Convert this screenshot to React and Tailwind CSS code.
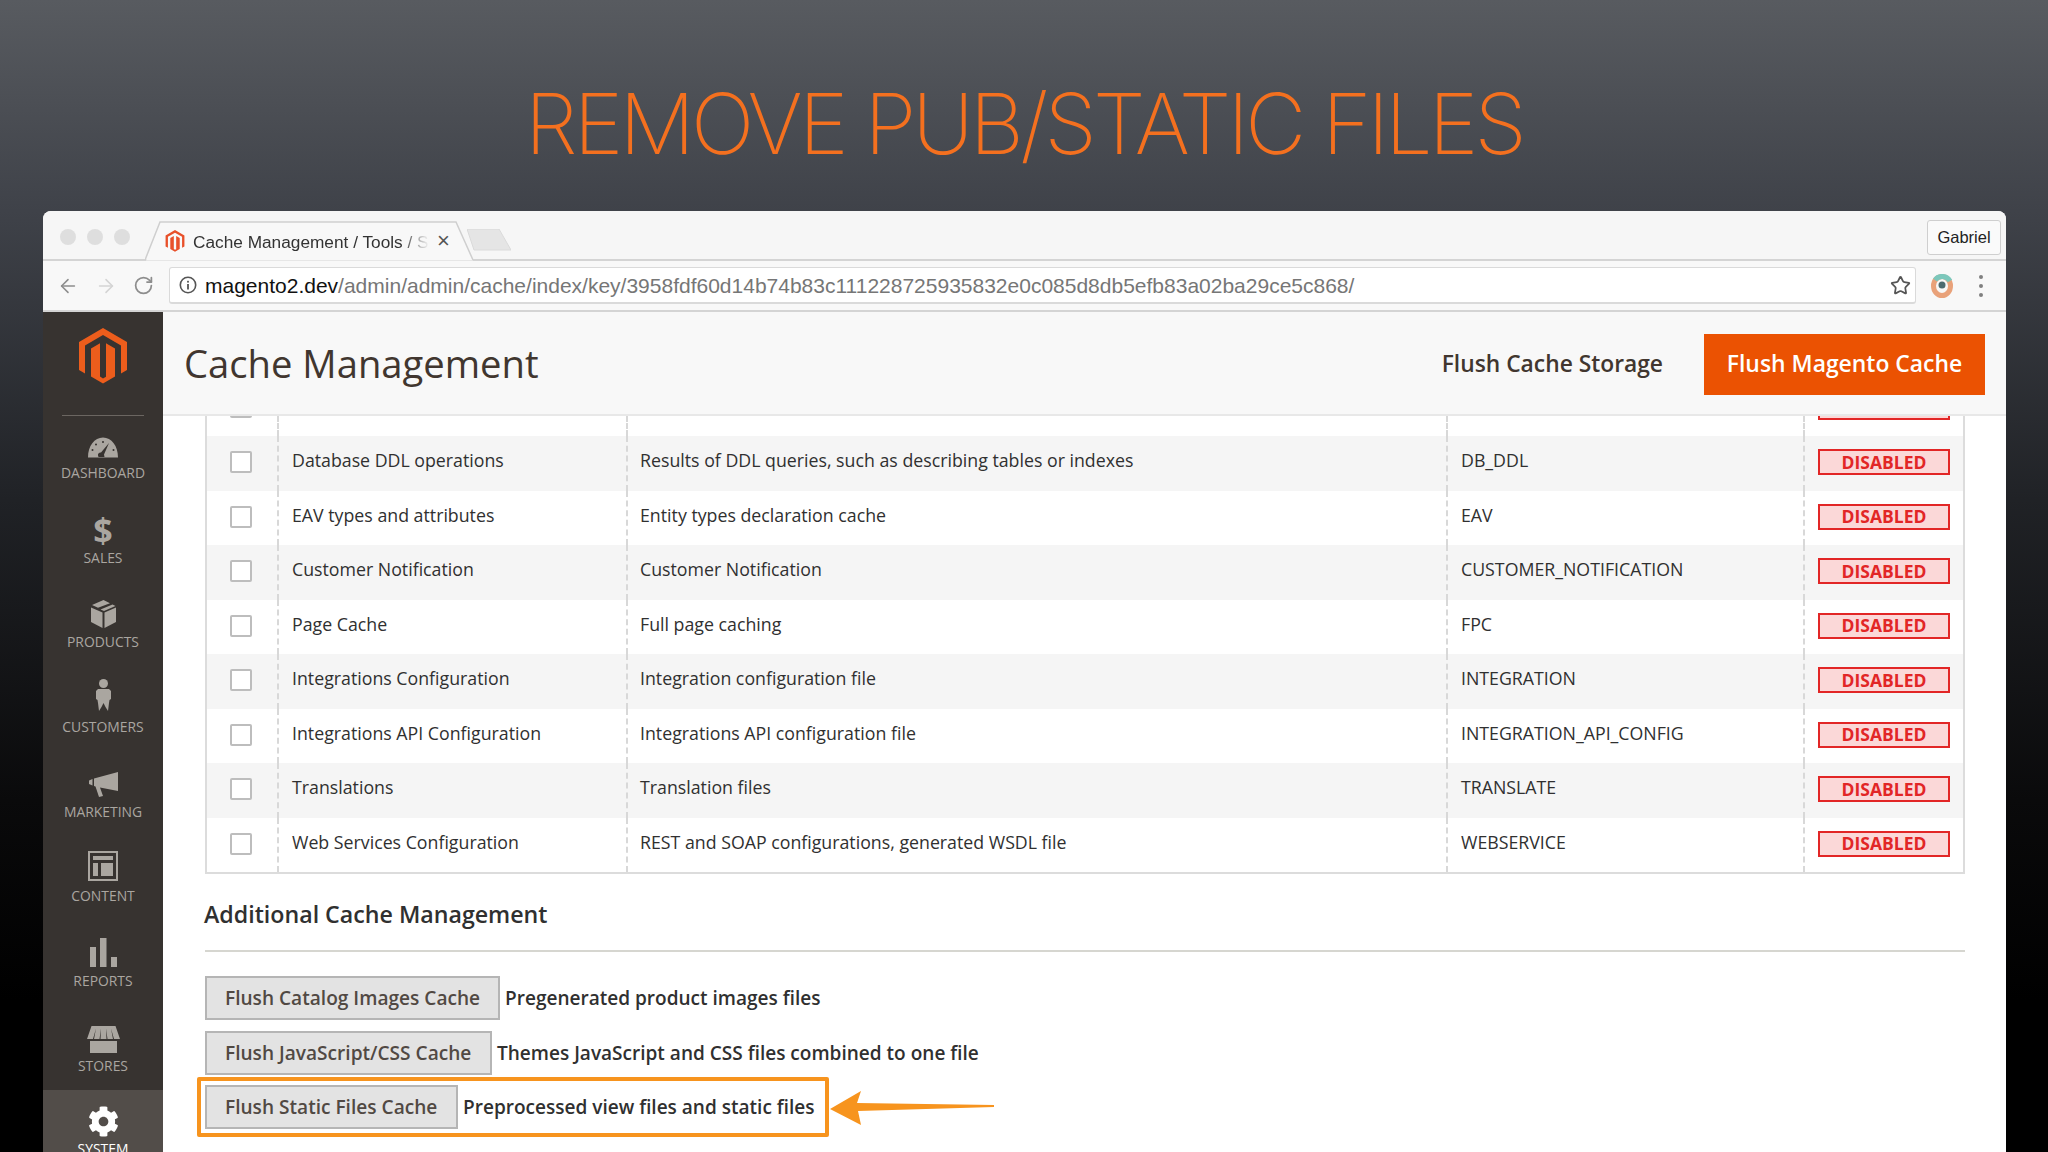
import React from "react";
import { FaCog } from "react-icons/fa";
import { ArrowLeft, ArrowRight, RotateCw, Star } from "lucide-react";

const rows = [
  ["Database DDL operations", "Results of DDL queries, such as describing tables or indexes", "DB_DDL"],
  ["EAV types and attributes", "Entity types declaration cache", "EAV"],
  ["Customer Notification", "Customer Notification", "CUSTOMER_NOTIFICATION"],
  ["Page Cache", "Full page caching", "FPC"],
  ["Integrations Configuration", "Integration configuration file", "INTEGRATION"],
  ["Integrations API Configuration", "Integrations API configuration file", "INTEGRATION_API_CONFIG"],
  ["Translations", "Translation files", "TRANSLATE"],
  ["Web Services Configuration", "REST and SOAP configurations, generated WSDL file", "WEBSERVICE"],
];

const gridCols = "grid grid-cols-[70px_349px_820px_357px_1fr]";
const cellBase = "flex items-center border-l-2 border-dashed border-[#d8d8d8]";

function MagentoLogo({ className }) {
  return (
    <svg viewBox="0 0 24 28" className={className} fill="currentColor">
      <path d="M12 0 24 7V21L21 22.7V8.7L12 3.5 3 8.7V22.7L0 21V7Z" />
      <path d="M10.5 7.6V24.3L12 25.2 13.5 24.4V7.6L18 10.3V24.2L12 27.7 6 24.2V10.3Z" />
    </svg>
  );
}

const Gauge = () => (
  <svg viewBox="0 0 30 21" className="w-[30px] h-[21px] mb-[7px]" fill="#aaa6a0">
    <path d="M0 20.5C0 9 6.5 0.5 15 0.5S30 9 30 20.5ZM15 4a1 1 0 100 2 1 1 0 000-2ZM8 6.5a1 1 0 100 2 1 1 0 000-2ZM4.5 12a1 1 0 100 2 1 1 0 000-2ZM25.500 12a1 1 0 100 2 1 1 0 000-2ZM16 17.500 21 6 13 15.500A2.500 2.500 0 0010 18.500L10.500 20H16.500Z" fillRule="evenodd" />
  </svg>
);
const Box = () => (
  <svg viewBox="0 0 25 28" className="w-[25px] h-[28px] mb-[6px]" fill="#aaa6a0">
    <path d="M12.500 0 19 3.300 7 7.800 1 5ZM21.500 4.500 24.500 6 13 11 9.500 9.500ZM0 7.500 11.500 12.500V28L0 22ZM25 7.500V22L13.500 28V12.500Z" />
  </svg>
);
const Person = () => (
  <svg viewBox="0 0 15 32" className="w-[15px] h-[32px] mb-[8px]" fill="#aaa6a0">
    <circle cx="7.500" cy="4.500" r="4.500" />
    <path d="M2 10H13L15 12V20L13.500 21 13 24 12 32 9.500 28 7.500 24 5.500 28 3 32 2 24 1.500 21 0 20V12Z" />
  </svg>
);
const Megaphone = () => (
  <svg viewBox="0 0 29 25" className="w-[29px] h-[25px] mb-[7px]" fill="#aaa6a0">
    <path d="M29 0V19L11 15.500 14 24 10 25 6.500 14.500 5 14V6.500ZM3.500 7V13.500L0 12V8.500Z" />
  </svg>
);
const Content = () => (
  <svg viewBox="0 0 30 30" className="w-[30px] h-[30px] mb-[7px]" fill="#aaa6a0">
    <path fillRule="evenodd" d="M0 0H30V30H0ZM2 2V28H28V2ZM5 5H25V9H5ZM5 12H10V25H5ZM13 12H25V25H13Z" />
  </svg>
);
const Reports = () => (
  <svg viewBox="0 0 27 29" className="w-[27px] h-[29px] mb-[6px]" fill="#aaa6a0">
    <path d="M0 9H6V29H0ZM10 0H16.500V29H10ZM21 19H27V29H21Z" />
  </svg>
);
const Stores = () => (
  <svg viewBox="0 0 33 27" className="w-[33px] h-[27px] mb-[5px]" fill="#aaa6a0">
    <path fillRule="evenodd" d="M4.500 0H28.500L33 13H27L24 2.500 26 13H20.500L19 2.500 19.500 13H13.500L14 2.500 12.500 13H7L9 2.500 6 13H0ZM3 15H30V27H3Z" />
  </svg>
);

const navItems = [
  ["DASHBOARD", <Gauge />],
  ["SALES", <span className="text-[34px] leading-[34px] font-bold text-[#aaa6a0] mb-[3px]">$</span>],
  ["PRODUCTS", <Box />],
  ["CUSTOMERS", <Person />],
  ["MARKETING", <Megaphone />],
  ["CONTENT", <Content />],
  ["REPORTS", <Reports />],
  ["STORES", <Stores />],
];

function Badge() {
  return (
    <div className="w-[132px] h-[26px] flex items-center justify-center bg-[#fbd8d8] border-2 border-[#e22626] text-[#e22626] font-bold text-[17.500px] leading-none">
      DISABLED
    </div>
  );
}

function Check() {
  return <div className="w-[22px] h-[22px] bg-white border-2 border-[#bdbdbd] rounded-[2px]" />;
}

function Flush({ w, label, note, boxed }) {
  return (
    <div className="relative flex items-center h-[44px]">
      <button className={`${w} h-[44px] text-left pl-[18px] pt-[2px] bg-[#e3e3e3] border-2 border-[#b5b5b5] text-[#514943] font-semibold text-[19.100px] leading-none`}>
        {label}
      </button>
      <span className="ml-[5px] pt-[2px] font-semibold text-[19.050px] leading-none text-[#303030]">{note}</span>
      {boxed && (
        <>
          <div className="absolute left-[-8px] top-[-8px] w-[632px] h-[60px] border-[4px] border-[#f7941e] rounded-[2px]" />
          <svg viewBox="0 0 170 36" className="absolute left-[623px] top-[5px] w-[170px] h-[36px]">
            <path d="M2 19 33 1 29 13 166 15V17L30 21 33 35Z" fill="#f7941e" />
          </svg>
        </>
      )}
    </div>
  );
}

export default function App() {
  return (
    <div className="h-screen overflow-hidden flex flex-col bg-[linear-gradient(180deg,#585b60_0px,#3f4249_211px,#202226_500px,#0a0a0b_800px,#000000_1000px)] font-['Open_Sans',sans-serif]">
      <div className="h-[211px] shrink-0 flex items-start justify-center pt-[78px]">
        <h1 className="font-['Inter',sans-serif] font-extralight text-[84px] leading-[92px] tracking-[-3.800px] text-[#f4701f] whitespace-nowrap">
          REMOVE PUB/STATIC FILES
        </h1>
      </div>

      <div className="flex-1 min-h-0 ml-[43px] mr-[42px] flex flex-col rounded-t-[8px] overflow-hidden bg-white">
        {/* Tab strip */}
        <div className="relative h-[50px] shrink-0 bg-[#f6f6f6] border-b-2 border-[#d4d4d4] flex items-center font-['Liberation_Sans',sans-serif]">
          <div className="flex gap-[11px] ml-[17px] mt-[3px]">
            <div className="w-[16px] h-[16px] rounded-full bg-[#dedede]" />
            <div className="w-[16px] h-[16px] rounded-full bg-[#dedede]" />
            <div className="w-[16px] h-[16px] rounded-full bg-[#dedede]" />
          </div>
          <div className="relative self-end ml-[15px] w-[330px] h-[40px] -mb-[2px] flex items-center">
            <svg viewBox="0 0 330 40" className="absolute inset-0 w-full h-full">
              <path d="M1 39.500 15 1H311L328 39.500" fill="#f8f8f8" />
              <path d="M0 39 15 1H311L328 39" fill="none" stroke="#cfcfcf" strokeWidth="1.500" />
            </svg>
            <MagentoLogo className="relative ml-[20px] w-[20px] h-[22px] text-[#e8502a]" />
            <span className="relative ml-[8px] w-[236px] overflow-hidden whitespace-nowrap text-[17.250px] leading-[22px] mt-[2px] text-[#333] [mask-image:linear-gradient(90deg,black_88%,#00000040_97%,transparent)]">
              Cache Management / Tools / Stores
            </span>
            <span className="relative ml-[8px] text-[22px] leading-none text-[#555]">×</span>
          </div>
          <svg viewBox="0 0 44 22" className="w-[44px] h-[22px] -ml-[8px] mt-[10px]">
            <path d="M0 0H32L44 21H7Z" fill="#e5e5e5" stroke="#dadada" />
          </svg>
          <div className="ml-auto mr-[5px] w-[74px] h-[35px] mt-[4px] bg-[#fafafa] border border-[#cfcfcf] rounded-[3px] flex items-center justify-center text-[16.500px] text-[#222]">
            Gabriel
          </div>
        </div>

        {/* Toolbar */}
        <div className="h-[51px] shrink-0 bg-[#f8f8f8] border-b-2 border-[#d4d4d4] flex items-center font-['Liberation_Sans',sans-serif]">
          <ArrowLeft className="w-[22px] h-[22px] ml-[14px] text-[#8d8d8d]" strokeWidth={1.700} />
          <ArrowRight className="w-[22px] h-[22px] ml-[16px] text-[#d4d4d4]" strokeWidth={1.700} />
          <RotateCw className="w-[21px] h-[21px] ml-[16px] text-[#8d8d8d]" strokeWidth={2} />
          <div className="ml-[15px] w-[1747px] h-[37px] bg-white border-x border-t border-b-2 border-[#dadada] rounded-[3px] flex items-center">
            <svg viewBox="0 0 18 18" className="w-[18px] h-[18px] ml-[9px] shrink-0">
              <circle cx="9" cy="9" r="7.700" fill="none" stroke="#555" strokeWidth="1.600" />
              <rect x="8.100" y="8" width="1.800" height="5.500" fill="#555" />
              <rect x="8.100" y="4.800" width="1.800" height="1.800" fill="#555" />
            </svg>
            <span className="ml-[8px] text-[21px] leading-[24px] mt-[1px] whitespace-nowrap text-[#111]">
              magento2.dev<span className="text-[#767676]">/admin/admin/cache/index/key/3958fdf60d14b74b83c111228725935832e0c085d8db5efb83a02ba29ce5c868/</span>
            </span>
            <Star className="ml-auto mr-[4px] w-[21px] h-[21px] text-[#555]" strokeWidth={2} />
          </div>
          <svg viewBox="0 0 22 24" className="w-[22px] h-[24px] ml-[15px]">
            <ellipse cx="11" cy="12" rx="8.500" ry="9.500" fill="none" stroke="#e9a27a" strokeWidth="5" />
            <path d="M4 6a9 9 0 0115 1" fill="none" stroke="#7cc7bb" strokeWidth="5" />
            <circle cx="11" cy="11" r="3.500" fill="#4c6b70" />
          </svg>
          <div className="ml-[26px] flex flex-col gap-[5px]">
            <div className="w-[4px] h-[4px] rounded-full bg-[#808080]" />
            <div className="w-[4px] h-[4px] rounded-full bg-[#808080]" />
            <div className="w-[4px] h-[4px] rounded-full bg-[#808080]" />
          </div>
        </div>

        <div className="flex-1 min-h-0 flex">
          {/* Sidebar */}
          <aside className="w-[120px] shrink-0 bg-[#373330] flex flex-col overflow-hidden">
            <div className="h-[104px] shrink-0 flex flex-col items-center">
              <MagentoLogo className="w-[48px] h-[56px] mt-[16px] text-[#ec5d1c]" />
              <div className="mt-[31px] w-[82px] h-[1px] bg-[#6b6661]" />
            </div>
            <div className="flex flex-col gap-[19.670px]">
              {navItems.map(([label, icon]) => (
                <div key={label} className="h-[65px] flex flex-col items-center justify-end">
                  {icon}
                  <span className="text-[13.900px] leading-[16px] text-[#aaa6a0]">{label}</span>
                </div>
              ))}
            </div>
            <div className="flex-1 mt-[16px] bg-[#524d49] flex flex-col items-center pt-[16px]">
              <FaCog className="w-[31px] h-[31px] text-white" />
              <span className="mt-[4px] text-[13.900px] leading-[16px] text-white">SYSTEM</span>
            </div>
          </aside>

          {/* Main */}
          <div className="flex-1 min-w-0 flex flex-col bg-white">
            <header className="h-[104px] shrink-0 bg-[#f8f8f8] border-b-2 border-[#e8e8e8] flex items-center pl-[21px] pr-[21px] pt-[3px]">
              <h2 className="text-[38.200px] leading-none text-[#41362f] mb-[2px]">Cache Management</h2>
              <span className="ml-auto font-semibold text-[22.800px] leading-none text-[#41362f]">Flush Cache Storage</span>
              <button className="ml-[41px] w-[281px] h-[61px] bg-[#eb5202] text-white font-semibold text-[22.900px] leading-none">
                Flush Magento Cache
              </button>
            </header>

            <div className="flex-1 min-h-0 overflow-hidden pl-[42px] pr-[41px]">
              <div className="border-x-2 border-b-2 border-[#dcdcdc] text-[17.750px] leading-none text-[#303030]">
                <div className={`${gridCols} h-[20px] overflow-hidden`}>
                  <div className="pl-[23px]"><div className="-mt-[20px]"><Check /></div></div>
                  <div className={cellBase} />
                  <div className={cellBase} />
                  <div className={cellBase} />
                  <div className={`${cellBase} pl-[13px] items-start`}><div className="-mt-[22px]"><Badge /></div></div>
                </div>
                {rows.map((r, i) => (
                  <div key={r[2]} className={`${gridCols} h-[54.500px] ${i % 2 === 0 ? "bg-[#f5f5f5]" : "bg-white"}`}>
                    <div className="flex items-center pl-[23px] pb-[2px]"><Check /></div>
                    <div className={`${cellBase} pl-[13px] pb-[4px]`}>{r[0]}</div>
                    <div className={`${cellBase} pl-[12px] pb-[4px]`}>{r[1]}</div>
                    <div className={`${cellBase} pl-[13px] pb-[4px]`}>{r[2]}</div>
                    <div className={`${cellBase} pl-[13px] pb-[2px]`}><Badge /></div>
                  </div>
                ))}
              </div>

              <h3 className="mt-[24px] font-semibold text-[23.200px] leading-[32px] text-[#303030] -ml-[1px]">Additional Cache Management</h3>
              <div className="mt-[20px] h-[2px] bg-[#d6d6d0]" />
              <div className="mt-[24px] flex flex-col gap-[10.500px]">
                <Flush w="w-[295px]" label="Flush Catalog Images Cache" note="Pregenerated product images files" />
                <Flush w="w-[287px]" label="Flush JavaScript/CSS Cache" note="Themes JavaScript and CSS files combined to one file" />
                <Flush w="w-[253px]" label="Flush Static Files Cache" note="Preprocessed view files and static files" boxed />
              </div>
            </div>
          </div>
        </div>
      </div>
    </div>
  );
}
